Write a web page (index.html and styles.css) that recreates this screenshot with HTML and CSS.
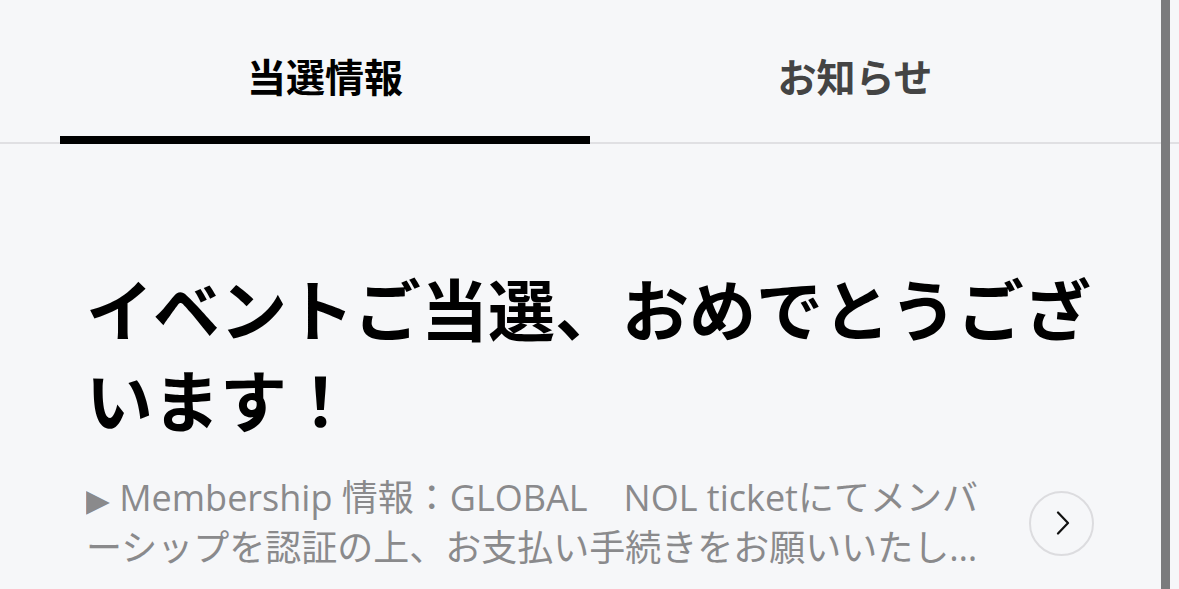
FILE: index.html
```html
<!DOCTYPE html>
<html lang="ja">
<head>
<meta charset="utf-8">
<title>当選情報</title>
<link rel="stylesheet" href="styles.css">
</head>
<body>
<nav class="tabs">
  <div class="tab tab-active">当選情報</div>
  <div class="tab">お知らせ</div>
</nav>
<main class="content">
  <h1 class="headline">イベントご当選、おめでとうございます！</h1>
  <div class="notice">
    <p class="notice-text"><span class="tri">▶</span> Membership 情報：GLOBAL　NOL ticketにてメンバーシップを認証の上、お支払い手続きをお願いいたします。詳細はマイページをご確認ください。</p>
    <button class="notice-btn" aria-label="詳細">
      <svg width="14" height="24" viewBox="0 0 14 24"><polyline points="2,1.5 12,12 2,22.5" fill="none" stroke="#111" stroke-width="2.2" stroke-linecap="round" stroke-linejoin="round"/></svg>
    </button>
  </div>
</main>
<div class="scrollbar"></div>
</body>
</html>
```

FILE: styles.css
```css
html, body {
  margin: 0;
  padding: 0;
  background: #f6f7f9;
}
body {
  font-family: "Noto Sans CJK JP", "Noto Sans", sans-serif;
  color: #000;
  height: 589px;
  overflow: hidden;
}
.tabs {
  display: flex;
  padding: 0 59px 0 60px;
  border-bottom: 2px solid #e0e0e3;
}
.tab {
  flex: 1;
  text-align: center;
  font-size: 39px;
  font-weight: 700;
  line-height: 54px;
  padding: 48px 0 34px;
  color: #444;
  margin-bottom: -2px;
  border-bottom: 8px solid transparent;
}
.tab-active {
  color: #000;
  border-bottom-color: #000;
}
.content {
  padding: 117px 60px 0 86px;
}
.headline {
  margin: 0;
  font-size: 67px;
  line-height: 91px;
  font-weight: 700;
}
.notice {
  display: flex;
  align-items: center;
  gap: 30px;
  margin-top: 30px;
}
.notice-text {
  flex: 1;
  margin: 0;
  font-family: "Open Sans", "Noto Sans CJK JP", sans-serif;
  font-size: 36px;
  line-height: 50px;
  color: #8a8a8c;
  display: -webkit-box;
  -webkit-box-orient: vertical;
  -webkit-line-clamp: 2;
  overflow: hidden;
}
.tri {
  font-family: "DejaVu Sans", sans-serif;
  font-size: 31px;
  line-height: 1;
}
.notice-btn {
  flex: none;
  width: 65px;
  height: 65px;
  border-radius: 50%;
  border: 2px solid #dcdcdf;
  background: transparent;
  display: flex;
  align-items: center;
  justify-content: center;
  padding: 0 0 0 3px;
  margin-right: 25px;
}
.scrollbar {
  position: fixed;
  top: 0;
  right: 9px;
  width: 9px;
  height: 100%;
  background: #7b7b7d;
}
```
